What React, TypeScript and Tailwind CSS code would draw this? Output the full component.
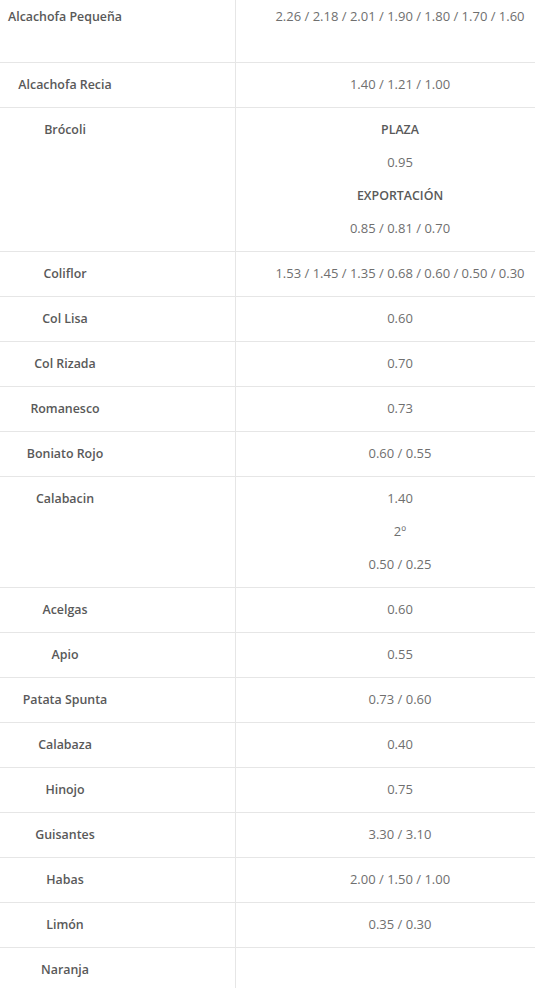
import React from "react";

type Row = { name: string; values: { t: string; b?: boolean }[]; first?: boolean };

const rows: Row[] = [
  { name: "Alcachofa Pequeña", values: [{ t: "2.26 / 2.18 / 2.01 / 1.90 / 1.80 / 1.70 / 1.60" }], first: true },
  { name: "Alcachofa Recia", values: [{ t: "1.40 / 1.21 / 1.00" }] },
  {
    name: "Brócoli",
    values: [{ t: "PLAZA", b: true }, { t: "0.95" }, { t: "EXPORTACIÓN", b: true }, { t: "0.85 / 0.81 / 0.70" }],
  },
  { name: "Coliflor", values: [{ t: "1.53 / 1.45 / 1.35 / 0.68 / 0.60 / 0.50 / 0.30" }] },
  { name: "Col Lisa", values: [{ t: "0.60" }] },
  { name: "Col Rizada", values: [{ t: "0.70" }] },
  { name: "Romanesco", values: [{ t: "0.73" }] },
  { name: "Boniato Rojo", values: [{ t: "0.60 / 0.55" }] },
  { name: "Calabacin", values: [{ t: "1.40" }, { t: "2º" }, { t: "0.50 / 0.25" }] },
  { name: "Acelgas", values: [{ t: "0.60" }] },
  { name: "Apio", values: [{ t: "0.55" }] },
  { name: "Patata Spunta", values: [{ t: "0.73 / 0.60" }] },
  { name: "Calabaza", values: [{ t: "0.40" }] },
  { name: "Hinojo", values: [{ t: "0.75" }] },
  { name: "Guisantes", values: [{ t: "3.30 / 3.10" }] },
  { name: "Habas", values: [{ t: "2.00 / 1.50 / 1.00" }] },
  { name: "Limón", values: [{ t: "0.35 / 0.30" }] },
  { name: "Naranja", values: [] },
];

export default function App() {
  return (
    <div
      className="w-[535px] h-[988px] overflow-hidden bg-white text-[13px] leading-[20px] text-[#6f6f6f]"
      style={{ fontFamily: '"Open Sans", "Liberation Sans", sans-serif' }}
    >
      {rows.map((r, i) => (
        <div
          key={i}
          className={
            "grid grid-cols-[236px_1fr] " + (r.first ? "h-[62px]" : "border-t border-[#e6e6e6]")
          }
        >
          <div className={"border-r border-[#e6e6e6] " + (r.first ? "pt-[7px]" : "pt-[12px] pb-[12px]")}>
            <div className="w-[130px] text-center text-[12.4px] font-semibold text-[#595959]">{r.name}</div>
          </div>
          <div
            className={
              "pl-[29px] text-center flex flex-col gap-[13px] " + (r.first ? "pt-[6px]" : "pt-[11px] pb-[13px]")
            }
          >
            {r.values.map((v, j) => (
              <div key={j} className={v.b ? "text-[12.4px] font-semibold text-[#595959] pt-[1px] -mb-[1px]" : ""}>
                {v.t}
              </div>
            ))}
          </div>
        </div>
      ))}
    </div>
  );
}
